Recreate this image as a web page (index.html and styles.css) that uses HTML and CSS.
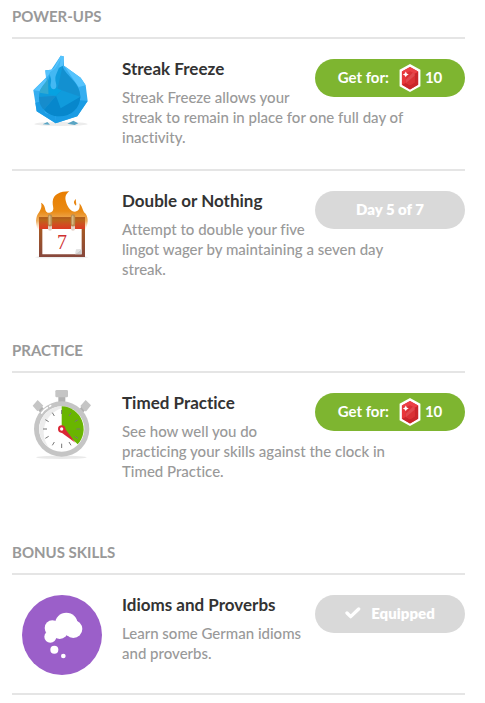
FILE: index.html
```html
<!DOCTYPE html>
<html lang="en">
<head>
<meta charset="utf-8">
<title>Store</title>
<link rel="stylesheet" href="styles.css">
</head>
<body>
<svg class="defs" aria-hidden="true">
  <symbol id="lingot" viewBox="284 44 64 86">
    <path fill="#fff" d="M316 44 348 62V112L316 130 284 112V62Z"/>
    <path fill="#e8363b" d="M316 53 341 67V108L316 122 291 108V67Z"/>
    <path fill="#c9252b" d="M341 67V108L316 122 291 108 303 102 316 109 330 101V74Z"/>
    <path fill="#ea4046" d="M316 53 341 67 330 74 316 66 303 73 291 67Z"/>
    <path fill="#d93035" d="M316 66 330 74V101L316 109 303 101V73Z"/>
    <path fill="#e0494e" d="M303 92 325 71 330 74V80L304 102Z"/>
    <path fill="#fff" d="M303 67 306 73 312 76 306 79 303 85 300 79 294 76 300 73Z"/>
  </symbol>
</svg>
<main class="store">
  <section class="group">
    <h2 class="group-title">POWER-UPS</h2>
    <article class="item">
      <svg class="icon" viewBox="6 42 240 240" aria-hidden="true">
        <ellipse cx="123" cy="237" rx="80" ry="6" fill="#ececec"/>
        <path fill="#5aa5c4" d="M68 238 82 231 90 239ZM142 236 160 227 175 235 164 240Z"/>
        <path fill="#35aef0" d="M122 32 131 34 132 62 182 98 197 121 203 168 172 214 107 235 50 199 46 173 40 136 78 98 76 76 94 74Z"/>
        <path fill="#55c3fd" d="M122 32 102 68 94 74 76 76 79 99 92 82 110 92 129 62 131 34ZM40 136 78 98 82 110 58 138ZM132 62 182 98 197 121 176 126Z"/>
        <path fill="#1a9ce4" d="M46 173 60 170 76 204 107 214 107 235 50 199ZM203 168 172 214 107 235 108 214 150 208 181 166Z"/>
        <path fill="#109bdc" d="M128 62C130 88 180 108 181 155 180 189 154 214 117 214 82 214 58 188 57 156 57 132 72 120 84 107L92 82Z"/>
        <path fill="#158bcb" d="M128 62C130 88 180 108 181 155L125 136 108 152 117 112Z" opacity=".7"/>
        <path fill="#0787cc" d="M181 155C180 189 154 214 117 214 98 214 82 206 72 194L108 152 122 190Z"/>
        <path fill="#168ccc" d="M57 156 108 152 72 194C61 184 57 172 57 156Z"/>
        <path fill="#32a9d2" d="M84 100 86 148 59 143C62 126 74 118 84 100Z"/>
        <path fill="#06a2e1" d="M86 120 125 136 108 152 86 148Z"/>
        <path fill="#43b8f3" d="M122 42C112 62 106 72 98 76L88 84 92 98C96 108 90 118 92 124 94 136 108 136 109 124 110 116 105 110 106 98 108 84 120 72 122 42Z"/>
      </svg>
      <button class="action buy" type="button">Get for: <svg class="gem" aria-hidden="true"><use href="#lingot"/></svg>10</button>
      <div class="text">
        <h3 class="name">Streak Freeze</h3>
        <p class="about">Streak Freeze allows your streak to remain in place for one full day of inactivity.</p>
      </div>
    </article>
    <article class="item">
      <svg class="icon" viewBox="6 33 240 240" aria-hidden="true">
        <defs>
          <linearGradient id="fire" x1="0" y1="0" x2="0" y2="1">
            <stop offset="0" stop-color="#e87d00"/><stop offset=".5" stop-color="#e98a14"/>
            <stop offset=".75" stop-color="#efb064"/><stop offset="1" stop-color="#f5d6ae" stop-opacity="0"/>
          </linearGradient>
          <linearGradient id="band" x1="0" y1="0" x2="0" y2="1">
            <stop offset="0" stop-color="#b86a18"/><stop offset=".5" stop-color="#cf4f20"/><stop offset="1" stop-color="#dc3a22"/>
          </linearGradient>
          <linearGradient id="frame" x1="0" y1="0" x2="0" y2="1">
            <stop offset="0" stop-color="#b36019"/><stop offset="1" stop-color="#87473c"/>
          </linearGradient>
        </defs>
        <path fill="#ececec" d="M44 232 57 229H192L206 232 190 235H58Z"/>
        <path fill="url(#fire)" d="M63 68C78 76 73 88 79 95 85 101 96 99 99 91 102 84 97 76 98 65 100 43 120 34 148 34 137 42 134 52 138 65 142 81 153 95 165 95 177 94 181 83 178 70 190 82 186 94 197 101 206 115 205 132 194 153H57C46 137 46 119 52 105 59 93 68 83 63 68Z"/>
        <path fill="#e98712" d="M168 57C161 62 159 70 168 77 171 71 166 66 168 57Z"/>
        <rect x="57" y="111" width="138" height="120" fill="url(#frame)"/>
        <rect x="57" y="118" width="138" height="29" fill="url(#band)"/>
        <path fill="#fff" d="M67 147H185V223H67Z"/>
        <path fill="#ccc" d="M165 223 185 207V223Z"/>
        <path fill="#e1e1e1" d="M165 223 168 208 185 207Z"/>
        <g stroke="#e5d1c7" stroke-width="12" stroke-linecap="round"><path d="M90 140V146M159 140V146"/></g>
        <g stroke="#b88d51" stroke-width="13" stroke-linecap="round"><path d="M90 109V133M159 109V133"/></g>
        <g stroke="#d9b780" stroke-width="5" stroke-linecap="round"><path d="M89 109V132M158 109V132"/></g>
        <text class="date" x="126" y="206">7</text>
      </svg>
      <button class="action done" type="button" disabled>Day 5 of 7</button>
      <div class="text">
        <h3 class="name">Double or Nothing</h3>
        <p class="about">Attempt to double your five lingot wager by maintaining a seven day streak.</p>
      </div>
    </article>
  </section>
  <section class="group">
    <h2 class="group-title">PRACTICE</h2>
    <article class="item">
      <svg class="icon" viewBox="6 39 240 240" aria-hidden="true">
        <ellipse cx="124" cy="232" rx="76" ry="5" fill="#e9e9e9"/>
        <path fill="#b1b1b1" d="M115 50H136V66H115ZM53 88 64 77 74 90 63 101ZM187 77 197 88 187 101 176 90Z"/>
        <g fill="#c5c5c5">
          <rect x="106" y="30" width="38" height="22" rx="4"/>
          <path d="M53 60 70 77 55 92Q52 94 49 90L38 77ZM197 60 213 76 200 92Q197 95 193 92L181 78Z"/>
          <circle cx="125" cy="147" r="83"/>
        </g>
        <circle cx="125" cy="147" r="68" fill="#fff"/>
        <path fill="#ececec" d="M125 79A68 68 0 0 0 86 202 75 75 0 0 1 125 85Z"/>
        <path fill="#69b500" d="M125 147V79A68 68 0 0 1 173 193Z"/>
        <path stroke="#777" stroke-width="3" d="M125 90V102M125 191V204M69 147H81M169 147H181M97 98 103 108M153 98 147 108M76 119 86 125M174 119 164 125M76 175 86 169M174 175 164 169M97 196 103 186M153 196 147 186"/>
        <path stroke="#fff" stroke-width="5" stroke-linecap="round" fill="none" d="M65 99Q72 88 82 83M89 79 92 77"/>
        <path fill="#da2836" d="M131 140 166 188 118 153Z"/>
        <circle cx="125" cy="147" r="8" fill="#fff" stroke="#da2836" stroke-width="6"/>
      </svg>
      <button class="action buy" type="button">Get for: <svg class="gem" aria-hidden="true"><use href="#lingot"/></svg>10</button>
      <div class="text">
        <h3 class="name">Timed Practice</h3>
        <p class="about">See how well you do practicing your skills against the clock in Timed Practice.</p>
      </div>
    </article>
  </section>
  <section class="group">
    <h2 class="group-title">BONUS SKILLS</h2>
    <article class="item">
      <svg class="icon" viewBox="21 15 240 240" aria-hidden="true">
        <circle cx="141" cy="135" r="120" fill="#9b5fc9"/>
        <g fill="#fff">
          <circle cx="154" cy="102" r="34"/><circle cx="112" cy="114" r="23"/><circle cx="175" cy="117" r="27"/>
          <circle cx="106" cy="140" r="18"/><circle cx="134" cy="122" r="25"/>
          <circle cx="118" cy="179" r="12"/><circle cx="145" cy="198" r="7"/>
        </g>
      </svg>
      <button class="action done" type="button" disabled><svg class="check" viewBox="110 68 48 36" aria-hidden="true"><path fill="none" stroke="#fff" stroke-width="10" stroke-linejoin="round" stroke-linecap="round" d="M116 86 127 97 151 74"/></svg>Equipped</button>
      <div class="text">
        <h3 class="name">Idioms and Proverbs</h3>
        <p class="about">Learn some German idioms and proverbs.</p>
      </div>
    </article>
  </section>
</main>
</body>
</html>
```
FILE: styles.css
```css
body {
  margin: 0;
  background: #fff;
  color: #999;
  font: 500 15px/20px Lato, "Noto Sans", sans-serif;
  font-variant-ligatures: none;
}

.defs {
  position: absolute;
  width: 0;
  height: 0;
}

.store {
  padding: 6px 20px 0 12px;
}

.group {
  margin-bottom: 39px;
}

.group-title {
  margin: 0;
  padding-bottom: 11px;
  border-bottom: 2px solid #e5e5e5;
  font-size: 15px;
  font-weight: 700;
}

.item {
  display: flow-root;
  padding: 20px 0;
}

.item:not(:last-child),
.group:last-child .item {
  border-bottom: 2px solid #e5e5e5;
}

.icon {
  float: left;
  width: 80px;
  height: 80px;
  margin: 0 0 -2px 10px;
  overflow: visible;
}

.date {
  font: 60px "Liberation Serif", serif;
  fill: #cf3030;
  text-anchor: middle;
}

.text {
  margin-left: 110px;
  padding-right: 40px;
}

.name {
  margin: 0 0 8px;
  color: #333;
  font-size: 17px;
  font-weight: 700;
  line-height: 20px;
}

.about {
  margin: 0;
  padding-bottom: 2px;
}

.action {
  float: right;
  display: flex;
  align-items: center;
  justify-content: center;
  width: 150px;
  height: 38px;
  padding: 0 0 2px;
  border: 0;
  border-radius: 19px;
  color: #fff;
  font: 700 15px/20px Lato, "Noto Sans", sans-serif;
}

.buy {
  background: #7eb530;
  cursor: pointer;
}

.done {
  background: #d9d9d9;
  font-weight: 800;
}

.gem {
  width: 22px;
  height: 28px;
  margin: 2px 4px 0 10px;
}

.check {
  width: 16px;
  height: 12px;
  margin-right: 10px;
}
```
